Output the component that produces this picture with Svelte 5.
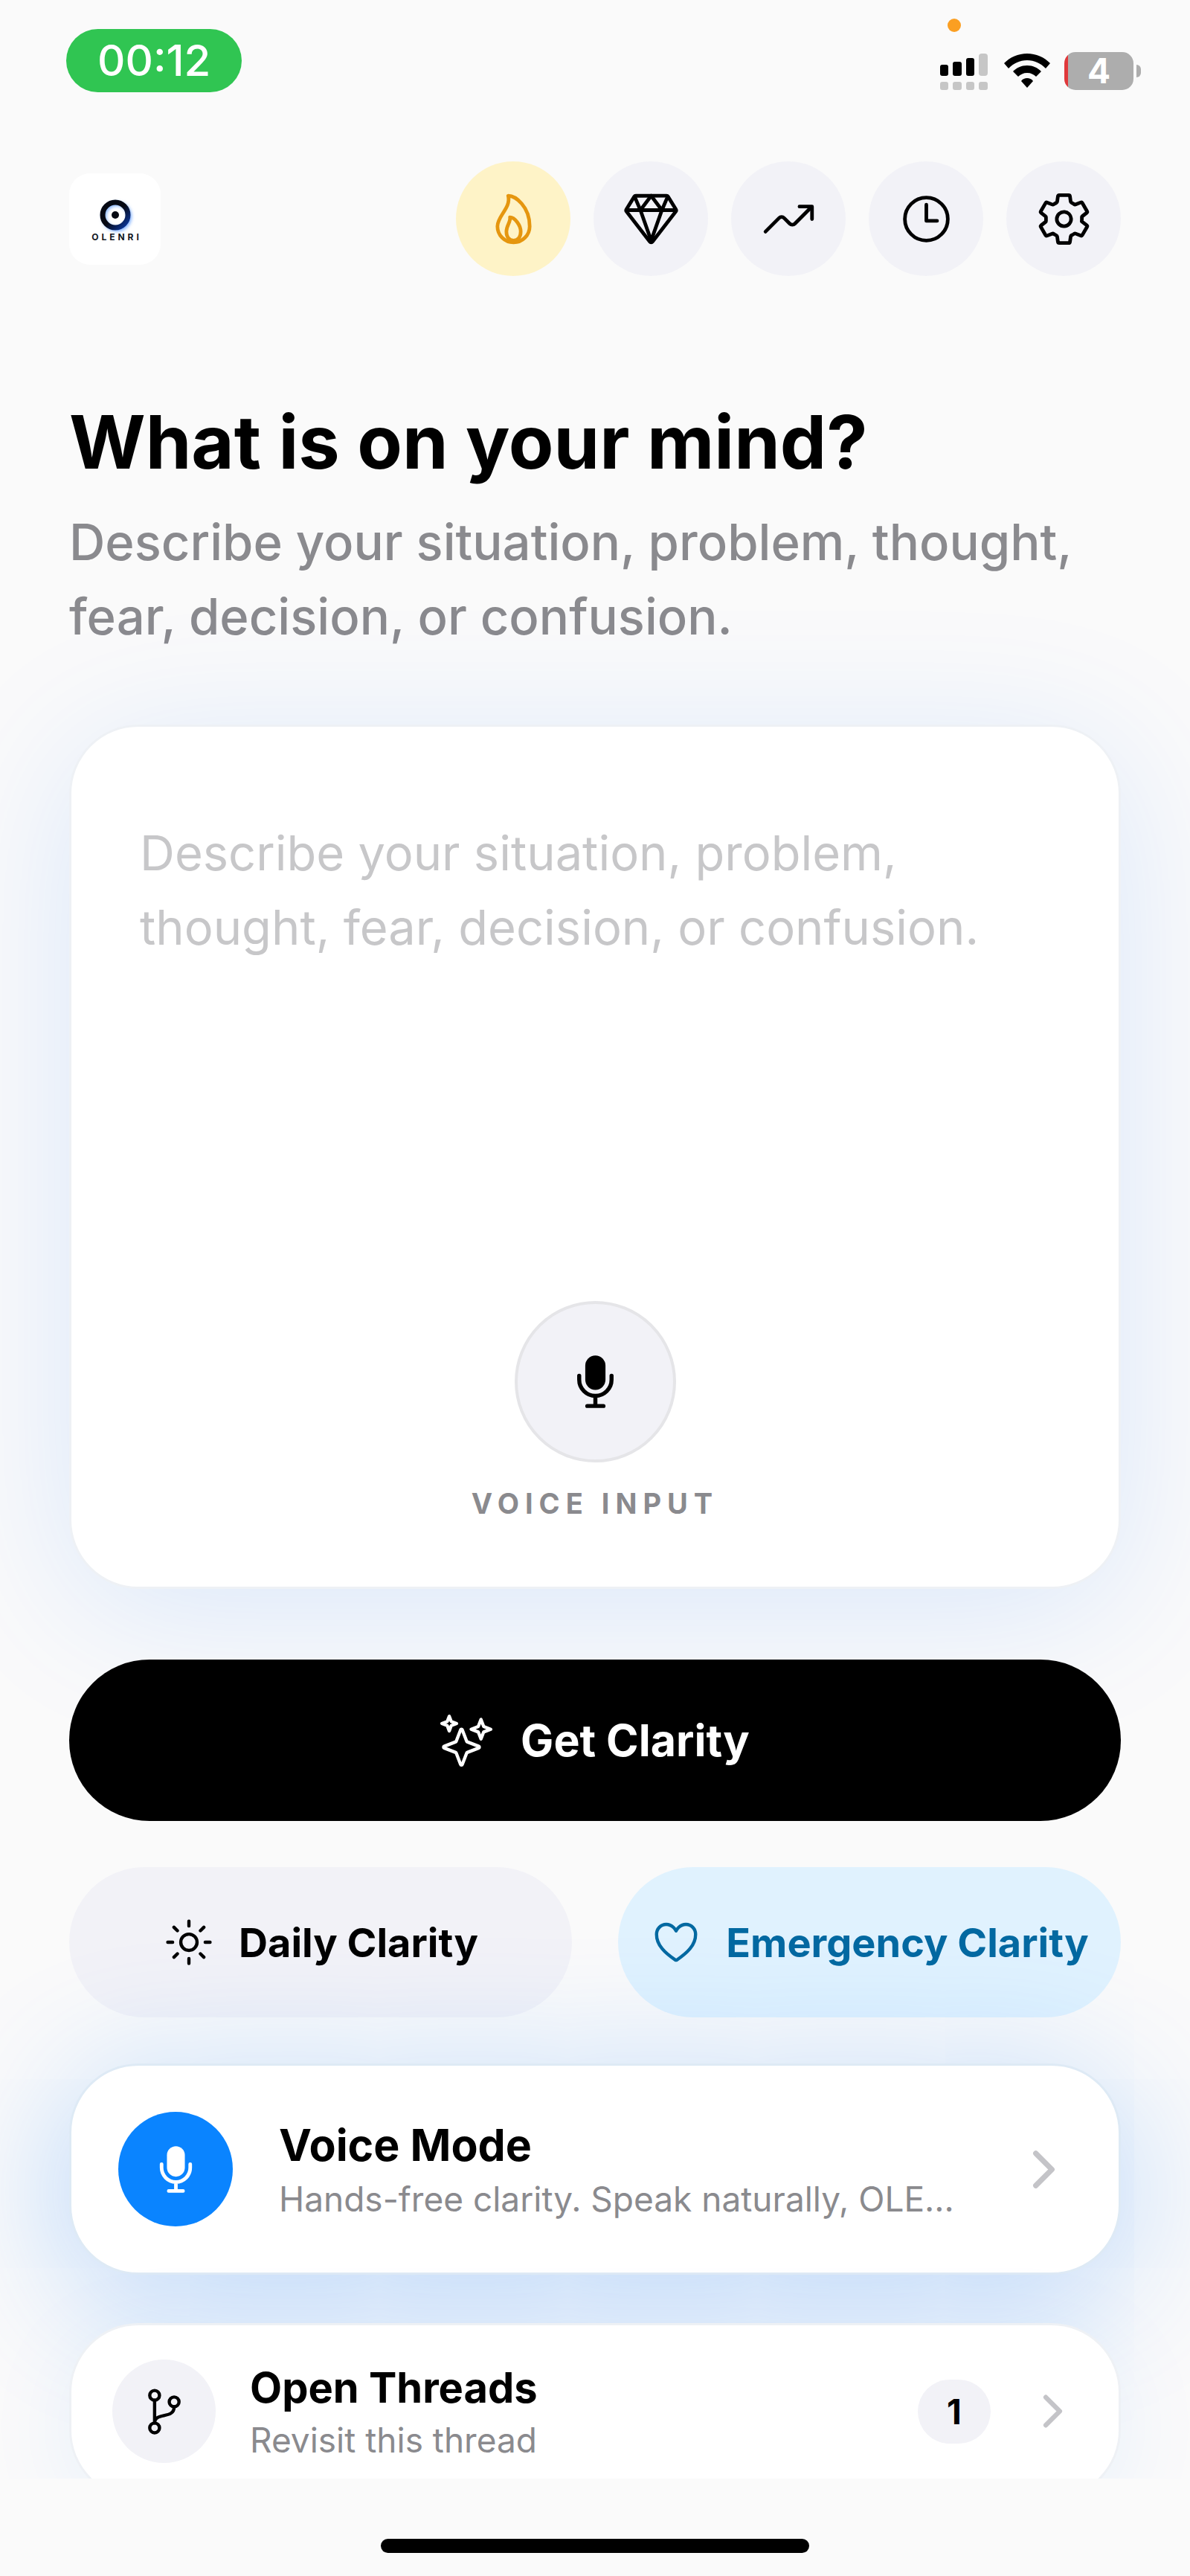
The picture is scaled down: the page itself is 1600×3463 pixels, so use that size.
<script>
    let thought = "";
    let threadCount = 1;

    const actions = [
        { name: "Streak", icon: "flame", warm: true },
        { name: "Premium", icon: "diamond" },
        { name: "Trends", icon: "trending" },
        { name: "History", icon: "time" },
        { name: "Settings", icon: "settings" }
    ];

    const icons = {
        flame: [
            "M112 320c0-93 124-165 96-272 66 0 192 96 192 272a144 144 0 01-288 0z",
            "M320 368c0 57.71-32 80-64 80s-64-22.29-64-80 40-86 32-128c42 0 96 70.29 96 128z"
        ],
        diamond: [
            "M35.42 188.21l207.75 269.46a16.17 16.17 0 0025.66 0l207.75-269.46a16.52 16.52 0 00.95-18.75L407.06 55.71A16.22 16.22 0 00393.27 48H118.73a16.22 16.22 0 00-13.79 7.71L34.47 169.46a16.52 16.52 0 00.95 18.75zM48 176h416",
            "M400 64l-48 112-96-128M112 64l48 112 96-128M256 448l-96-272M256 448l96-272"
        ],
        trending: [
            "M352 144h112v112",
            "M48 368l121.37-121.37a32 32 0 0145.26 0l50.74 50.74a32 32 0 0045.26 0L448 160"
        ],
        time: [
            "M256 64C150 64 64 150 64 256s86 192 192 192 192-86 192-192S362 64 256 64z",
            "M256 128v144h96"
        ],
        settings: [
            "M262.29 192.31a64 64 0 1057.4 57.4 64.13 64.13 0 00-57.4-57.4zM416.39 256a154.34 154.34 0 01-1.53 20.79l45.21 35.46a10.81 10.81 0 012.45 13.75l-42.77 74a10.81 10.81 0 01-13.14 4.59l-44.9-18.08a16.11 16.11 0 00-15.17 1.75A164.48 164.48 0 01325 400.8a15.94 15.94 0 00-8.82 12.14l-6.73 47.89a11.08 11.08 0 01-10.68 9.17h-85.54a11.11 11.11 0 01-10.69-8.87l-6.72-47.82a16.07 16.07 0 00-9-12.22 155.3 155.3 0 01-21.46-12.57 16 16 0 00-15.11-1.71l-44.89 18.07a10.81 10.81 0 01-13.14-4.58l-42.77-74a10.8 10.8 0 012.45-13.75l38.21-30a16.05 16.05 0 006-14.08c-.36-4.17-.58-8.33-.58-12.5s.21-8.27.58-12.35a16 16 0 00-6.07-13.94l-38.19-30A10.81 10.81 0 0149.48 186l42.77-74a10.81 10.81 0 0113.14-4.59l44.9 18.08a16.11 16.11 0 0015.17-1.75A164.48 164.48 0 01187 111.2a15.94 15.94 0 008.82-12.14l6.73-47.89A11.08 11.08 0 01213.23 42h85.54a11.11 11.11 0 0110.69 8.87l6.72 47.82a16.07 16.07 0 009 12.22 155.3 155.3 0 0121.46 12.57 16 16 0 0015.11 1.71l44.89-18.07a10.81 10.81 0 0113.14 4.58l42.77 74a10.8 10.8 0 01-2.45 13.75l-38.21 30a16.05 16.05 0 00-6.05 14.08c.33 4.14.55 8.3.55 12.47z"
        ],
        sparkles: [
            "M259.92 262.91L216.4 149.77a9 9 0 00-16.8 0l-43.52 113.14a9 9 0 01-5.17 5.17L37.77 311.6a9 9 0 000 16.8l113.14 43.52a9 9 0 015.17 5.17l43.52 113.14a9 9 0 0016.8 0l43.52-113.14a9 9 0 015.17-5.17l113.14-43.52a9 9 0 000-16.8l-113.14-43.52a9 9 0 01-5.17-5.17z",
            "M108 68L88 16 68 68 16 88l52 20 20 52 20-52 52-20-52-20z",
            "M426.67 117.33L400 48l-26.67 69.33L304 144l69.33 26.67L400 240l26.67-69.33L496 144l-69.33-26.67z"
        ],
        sunny: [
            "M256 48v48M256 416v48M403.08 108.92l-33.94 33.94M142.86 369.14l-33.94 33.94M464 256h-48M96 256H48M403.08 403.08l-33.94-33.94M142.86 142.86l-33.94-33.94",
            "M336 256a80 80 0 11-160 0 80 80 0 01160 0z"
        ],
        heart: [
            "M352.92 80C288 80 256 144 256 144s-32-64-96.92-64c-52.76 0-94.54 44.14-95.08 96.81-1.1 109.33 86.73 187.08 183 252.42a16 16 0 0018 0c96.26-65.34 184.09-143.09 183-252.42-.54-52.67-42.32-96.81-95.08-96.81z"
        ],
        branch: [
            "M208 96a48 48 0 11-96 0 48 48 0 0196 0zM208 416a48 48 0 11-96 0 48 48 0 0196 0zM400 160a48 48 0 11-96 0 48 48 0 0196 0z",
            "M160 368V144M352 208c0 128-192 48-192 160"
        ]
    };
</script>

{#snippet icon(name)}
    <svg class="icon" viewBox="0 0 512 512" aria-hidden="true">
        {#each icons[name] as d}
            <path {d} />
        {/each}
    </svg>
{/snippet}

{#snippet mic()}
    <svg class="icon" viewBox="0 0 512 512" aria-hidden="true">
        <path d="M192 448h128M384 208v32c0 70.4-57.6 128-128 128s-128-57.6-128-128v-32M256 368v80" />
        <rect class="solid" x="176" y="48" width="160" height="272" rx="80" />
    </svg>
{/snippet}

{#snippet chevron()}
    <svg class="icon chevron" viewBox="0 0 512 512" aria-hidden="true">
        <path d="M184 112l144 144-144 144" />
    </svg>
{/snippet}

<div class="screen">
    <main>
        <div class="status">
            <time class="clock">00:12</time>
            <div class="indicators">
                <svg class="signal" viewBox="0 0 64 98" aria-hidden="true">
                    <circle cx="19" cy="11" r="9" fill="#fb9f22" />
                    <rect x="0" y="64" width="11" height="15" rx="3" />
                    <rect x="17" y="60" width="12" height="19" rx="3" />
                    <rect x="35" y="55" width="11" height="24" rx="3" />
                    <g fill="#c6c6c6">
                        <rect x="52" y="49" width="12" height="30" rx="4" />
                        <rect x="0" y="87" width="11" height="11" rx="3" />
                        <rect x="17" y="87" width="12" height="11" rx="3" />
                        <rect x="35" y="87" width="11" height="11" rx="3" />
                        <rect x="52" y="87" width="12" height="11" rx="3" />
                    </g>
                </svg>
                <svg class="wifi" viewBox="0 0 62 46" aria-hidden="true">
                    <path d="M31 0C19 0 8 5 0 13l6 7c7-7 15-11 25-11s18 4 25 11l6-7C54 5 43 0 31 0z" />
                    <path d="M31 16c-8 0-14 3-19 8l7 7c3-3 7-5 12-5s9 2 12 5l7-7c-5-5-11-8-19-8z" />
                    <path d="M31 33c-3 0-6 1-8 4l8 9 8-9c-2-3-5-4-8-4z" />
                </svg>
                <div class="battery"><span>4</span></div>
            </div>
        </div>

        <header>
            <svg class="logo" viewBox="0 0 123 123" role="img" aria-label="Olenri">
                <defs>
                    <linearGradient id="ring" x1="0" y1="0" x2="1" y2="1">
                        <stop offset="0.5" stop-color="#060913" />
                        <stop offset="1" stop-color="#0b3aa8" />
                    </linearGradient>
                    <filter id="glow" x="-50%" y="-50%" width="200%" height="200%">
                        <feGaussianBlur stdDeviation="2" />
                    </filter>
                </defs>
                <rect width="123" height="123" rx="28" fill="#fff" />
                <circle cx="64" cy="58" r="17" fill="none" stroke="#7fb0ff" stroke-width="6" filter="url(#glow)" />
                <circle cx="62" cy="56" r="17" fill="none" stroke="url(#ring)" stroke-width="7" />
                <circle cx="62" cy="56" r="5" fill="#060913" />
                <text x="64" y="90" text-anchor="middle">OLENRI</text>
            </svg>
            <nav>
                {#each actions as action}
                    <button class="round" class:warm={action.warm} aria-label={action.name}>
                        {@render icon(action.icon)}
                    </button>
                {/each}
            </nav>
        </header>

        <h1>What is on your mind?</h1>
        <p class="lead">Describe your situation, problem, thought, fear, decision, or confusion.</p>

        <section class="card composer">
            <textarea
                bind:value={thought}
                aria-label="What is on your mind?"
                placeholder="Describe your situation, problem, thought, fear, decision, or confusion."
            ></textarea>
            <button class="record" aria-labelledby="voice-label">{@render mic()}</button>
            <span id="voice-label">VOICE INPUT</span>
        </section>

        <button class="primary">{@render icon("sparkles")}Get Clarity</button>

        <div class="pair">
            <button class="daily">{@render icon("sunny")}Daily Clarity</button>
            <button class="emergency">{@render icon("heart")}Emergency Clarity</button>
        </div>

        <button class="card row voice">
            <span class="badge">{@render mic()}</span>
            <span class="text">
                <strong>Voice Mode</strong>
                <small>Hands-free clarity. Speak naturally, OLE...</small>
            </span>
            {@render chevron()}
        </button>

        <button class="card row threads">
            <span class="badge">{@render icon("branch")}</span>
            <span class="text">
                <strong>Open Threads</strong>
                <small>Revisit this thread</small>
            </span>
            <span class="count">{threadCount}</span>
            {@render chevron()}
        </button>
    </main>
    <footer><div class="home"></div></footer>
</div>

<style>
    :global(body) {
        background: #fafafa;
    }
    .screen {
        display: flex;
        flex-direction: column;
        height: 100vh;
        background: #fafafa;
        color: #000;
        font-family: Inter, "Liberation Sans", sans-serif;
    }
    main {
        flex: 1;
        min-height: 0;
        display: flex;
        flex-direction: column;
        padding: 0 93px;
        overflow: hidden auto;
        scrollbar-width: none;
    }
    main > :global(*) {
        flex-shrink: 0;
    }
    button {
        border: 0;
        margin: 0;
        padding: 0;
        font: inherit;
        color: inherit;
        background: none;
        cursor: pointer;
    }
    .icon {
        display: block;
        flex: none;
        width: 70px;
        height: 70px;
        fill: none;
        stroke: currentColor;
        stroke-width: 32;
        stroke-linecap: round;
        stroke-linejoin: round;
    }
    .solid {
        fill: currentColor;
        stroke: none;
    }
    .chevron {
        color: #c4c4c8;
        stroke-width: 48;
    }

    /* status bar */
    .status {
        display: flex;
        justify-content: space-between;
        align-items: flex-start;
        height: 194px;
        margin: 0 -28px 0 -4px;
    }
    .clock {
        margin-top: 39px;
        padding: 0 42px;
        border-radius: 43px;
        background: #30c552;
        color: #fff;
        font-size: 58px;
        font-weight: 500;
        line-height: 85px;
    }
    .indicators {
        display: flex;
        align-items: flex-end;
        padding-top: 23px;
    }
    .signal {
        width: 64px;
        height: 98px;
        margin-right: 22px;
    }
    .wifi {
        width: 62px;
        height: 46px;
        margin: 0 19px 3px 0;
    }
    .battery {
        position: relative;
        width: 93px;
        height: 51px;
        margin-right: 11px;
        border-radius: 15px;
        background: linear-gradient(90deg, #e0383b 5px, #adadad 5px);
        color: #fff;
        font-size: 46px;
        font-weight: 700;
        line-height: 51px;
        text-align: center;
    }
    .battery::after {
        content: "";
        position: absolute;
        left: 97px;
        top: 17px;
        width: 6px;
        height: 17px;
        border-radius: 0 6px 6px 0;
        background: #adadad;
    }

    header {
        display: flex;
        justify-content: space-between;
        align-items: center;
        margin-top: 23px;
    }
    .logo {
        width: 123px;
        height: 123px;
    }
    .logo text {
        font-size: 12px;
        font-weight: 700;
        letter-spacing: 4px;
        fill: #111722;
    }
    nav {
        display: flex;
        gap: 31px;
    }
    .round {
        display: grid;
        place-items: center;
        width: 154px;
        height: 154px;
        border-radius: 50%;
        background: #f2f2f7;
    }
    .round .icon {
        width: 77px;
        height: 77px;
    }
    .warm {
        background: #fef3c7;
        color: #e5960f;
    }

    h1 {
        margin: 163px 0 25px;
        font-size: 99px;
        font-weight: 700;
        line-height: 120px;
    }
    .lead {
        margin: 0 0 95px;
        color: #8a8a8e;
        font-size: 67px;
        font-weight: 500;
        line-height: 100px;
    }

    .card {
        box-sizing: border-box;
        border: 3px solid #eef1f5;
        border-radius: 93px;
        background: #fff;
        box-shadow: 0 30px 200px rgba(10, 110, 255, 0.13);
    }
    .composer {
        display: flex;
        flex-direction: column;
        align-items: center;
        padding: 120px 92px 89px;
    }
    textarea {
        box-sizing: border-box;
        width: 100%;
        height: 652px;
        padding: 0;
        border: 0;
        outline: 0;
        resize: none;
        background: none;
        color: #000;
        font: 400 65px/100px Inter, "Liberation Sans", sans-serif;
    }
    textarea::placeholder {
        color: #c7c7c9;
        opacity: 1;
    }
    .record {
        display: grid;
        place-items: center;
        box-sizing: border-box;
        width: 217px;
        height: 217px;
        margin-bottom: 32px;
        border: 4px solid #e5e5e8;
        border-radius: 50%;
        background: #f2f2f7;
    }
    .record .icon {
        width: 87px;
        height: 87px;
    }
    #voice-label {
        color: #8a8a8e;
        font-size: 38px;
        font-weight: 700;
        line-height: 46px;
        letter-spacing: 8px;
    }

    .primary,
    .daily,
    .emergency {
        display: flex;
        align-items: center;
        justify-content: center;
        gap: 32px;
        border-radius: 108px;
        white-space: nowrap;
    }
    .primary {
        height: 217px;
        margin: 95px 0 62px;
        gap: 38px;
        background: #000;
        color: #fff;
        font-size: 59px;
        font-weight: 700;
    }
    .pair {
        display: grid;
        grid-template-columns: 1fr 1fr;
        gap: 62px;
        margin-bottom: 62px;
        font-size: 54px;
        font-weight: 700;
    }
    .daily,
    .emergency {
        height: 202px;
    }
    .daily {
        background: #f2f2f7;
    }
    .emergency {
        background: #e0f2fe;
        color: #0369a1;
    }

    .row {
        position: relative;
        display: flex;
        align-items: center;
        text-align: left;
    }
    .badge {
        display: grid;
        place-items: center;
        flex: none;
        border-radius: 50%;
    }
    .text {
        flex: 1;
        min-width: 0;
        display: flex;
        flex-direction: column;
        gap: 8px;
        white-space: nowrap;
    }
    strong {
        font-weight: 700;
    }
    small {
        overflow: hidden;
        color: #8a8a8e;
        font-size: 46px;
        line-height: 56px;
    }
    .voice {
        padding: 62px 62px 62px 63px;
        margin-bottom: 65px;
        border-color: #deeaf5;
        box-shadow: 0 30px 190px rgba(10, 120, 255, 0.3);
    }
    .voice .badge {
        width: 154px;
        height: 154px;
        margin-right: 62px;
        background: #0a84ff;
        color: #fff;
    }
    .voice .badge .icon {
        width: 77px;
        height: 77px;
    }
    .voice strong {
        font-size: 59px;
        line-height: 72px;
    }
    .voice .chevron {
        width: 77px;
        height: 77px;
    }
    .threads {
        padding: 46px 55px;
        box-shadow: 0 20px 120px rgba(10, 132, 255, 0.08);
    }
    .threads .badge {
        width: 139px;
        height: 139px;
        margin-right: 46px;
        background: #f2f2f7;
    }
    .threads strong {
        font-size: 56px;
        line-height: 68px;
    }
    .threads .chevron {
        width: 67px;
        height: 67px;
    }
    .count {
        box-sizing: border-box;
        min-width: 98px;
        margin-right: 50px;
        border-radius: 43px;
        background: #f2f2f7;
        font-size: 46px;
        font-weight: 700;
        line-height: 86px;
        text-align: center;
    }

    footer {
        flex: none;
        display: flex;
        justify-content: center;
        align-items: flex-end;
        height: 131px;
    }
    .home {
        width: 36%;
        height: 19px;
        margin-bottom: 31px;
        border-radius: 10px;
        background: #000;
    }
</style>
